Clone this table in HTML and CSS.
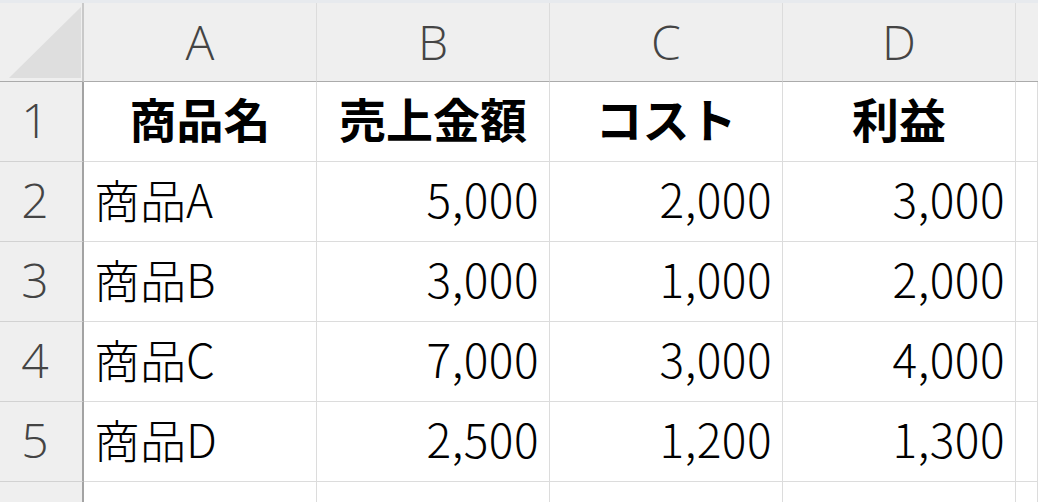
FILE: index.html
```html
<!DOCTYPE html>
<html lang="ja">
<head>
<meta charset="utf-8">
<title>Sheet</title>
<link rel="stylesheet" href="styles.css">
</head>
<body>
<div class="sheet">
  <div class="topbar"></div>
  <div class="grid">
    <div class="corner">
      <svg class="corner-tri" width="72" height="71" viewBox="0 0 72 71"><polygon points="0,71 72,71 72,0" fill="#dedede"/></svg>
    </div>
    <div class="colhead">A</div>
    <div class="colhead">B</div>
    <div class="colhead">C</div>
    <div class="colhead">D</div>
    <div class="colhead last"></div>

    <div class="rowhead">1</div>
    <div class="cell title">商品名</div>
    <div class="cell title">売上金額</div>
    <div class="cell title">コスト</div>
    <div class="cell title">利益</div>
    <div class="cell"></div>

    <div class="rowhead">2</div>
    <div class="cell text">商品A</div>
    <div class="cell num">5,000</div>
    <div class="cell num">2,000</div>
    <div class="cell num">3,000</div>
    <div class="cell"></div>

    <div class="rowhead">3</div>
    <div class="cell text">商品B</div>
    <div class="cell num">3,000</div>
    <div class="cell num">1,000</div>
    <div class="cell num">2,000</div>
    <div class="cell"></div>

    <div class="rowhead">4</div>
    <div class="cell text">商品C</div>
    <div class="cell num">7,000</div>
    <div class="cell num">3,000</div>
    <div class="cell num">4,000</div>
    <div class="cell"></div>

    <div class="rowhead">5</div>
    <div class="cell text">商品D</div>
    <div class="cell num">2,500</div>
    <div class="cell num">1,200</div>
    <div class="cell num">1,300</div>
    <div class="cell"></div>

    <div class="rowhead"></div>
    <div class="cell"></div>
    <div class="cell"></div>
    <div class="cell"></div>
    <div class="cell"></div>
    <div class="cell"></div>
  </div>
</div>
</body>
</html>
```

FILE: styles.css
```css
html, body {
  margin: 0;
  padding: 0;
  background: #ffffff;
}

.sheet {
  width: 1038px;
  height: 502px;
  overflow: hidden;
}

.topbar {
  height: 3px;
  background: #e7eaee;
}

.grid {
  display: grid;
  grid-template-columns: 84px repeat(4, 233px) 1fr;
  grid-template-rows: 79px repeat(5, 80px) 80px;
}

.grid > div {
  box-sizing: border-box;
  display: flex;
  align-items: center;
  overflow: hidden;
  white-space: nowrap;
}

.corner {
  background: #efefef;
  border-right: 2px solid #c9c9c9;
  border-bottom: 1px solid #ababab;
  padding: 4px 0 0 9px;
  align-items: flex-start !important;
}

.corner-tri {
  display: block;
}

.colhead {
  background: #efefef;
  border-right: 1px solid #dcdcdc;
  border-bottom: 1px solid #ababab;
  justify-content: center;
  font-family: "Open Sans", "Noto Sans", sans-serif;
  font-weight: 300;
  font-size: 48px;
  color: #444444;
  padding-bottom: 2px;
}

.colhead.last {
  border-right: none;
}

.rowhead {
  background: #efefef;
  border-right: 2px solid #a3a3a3;
  border-bottom: 1px solid #d2d2d2;
  justify-content: center;
  padding-right: 12px;
  font-family: "Open Sans", "Noto Sans", sans-serif;
  font-weight: 300;
  font-size: 48px;
  color: #444444;
  padding-bottom: 4px;
}

.cell {
  border-right: 1px solid #dcdcdc;
  border-bottom: 1px solid #dcdcdc;
  font-family: "Noto Sans CJK JP", sans-serif;
  font-size: 46px;
  color: #000000;
  padding: 0 10px 8px;
}

.cell.title {
  justify-content: center;
  font-weight: 700;
  font-size: 47px;
}

.cell.text {
  justify-content: flex-start;
  font-weight: 300;
}

.cell.num {
  justify-content: flex-end;
  font-weight: 300;
  letter-spacing: 0.5px;
}
```
